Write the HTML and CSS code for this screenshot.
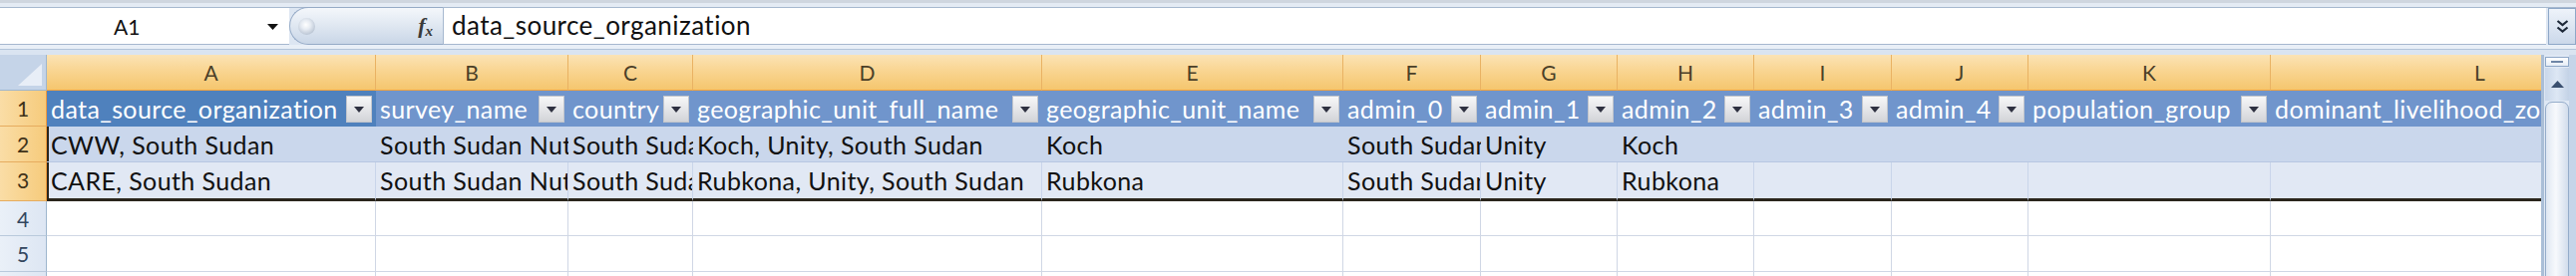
FILE: index.html
```html
<!DOCTYPE html>
<html>
<head>
    <title>Book1 - Sheet1</title>
    <meta name="viewport" content="width=device-width, initial-scale=1.0">
    <link rel="stylesheet" href="styles.css">
</head>
<body>
    <div class="top-edge"></div>

    <!-- Formula bar -->
    <div class="formula-bar">
        <div class="name-box">
            <span class="name-ref">A1</span>
            <svg class="name-arrow" width="11" height="6" viewBox="0 0 11 6"><path d="M0 0H11L5.5 6Z" fill="#111"/></svg>
        </div>
        <div class="fx-pill">
            <span class="grip"></span>
            <span class="fx">f<span class="fx-x">x</span></span>
        </div>
        <div class="formula-input">data_source_organization</div>
        <div class="expand-btn">
            <svg width="13" height="15" viewBox="0 0 13 15"><path d="M1.5 2L6.5 6L11.5 2M1.5 8.5L6.5 12.5L11.5 8.5" fill="none" stroke="#1d2838" stroke-width="2.2"/></svg>
        </div>
    </div>
    <div class="bar-gap"></div>

    <!-- Sheet -->
    <div class="sheet">
        <div class="grid">
            <div class="row head-row">
                <div class="corner">
                    <svg width="24" height="22" viewBox="0 0 24 22"><path d="M24 0V22H0Z" fill="#e8eef7"/></svg>
                </div>
                <div class="col-head">A</div>
                <div class="col-head">B</div>
                <div class="col-head">C</div>
                <div class="col-head">D</div>
                <div class="col-head">E</div>
                <div class="col-head">F</div>
                <div class="col-head">G</div>
                <div class="col-head">H</div>
                <div class="col-head">I</div>
                <div class="col-head">J</div>
                <div class="col-head">K</div>
                <div class="col-head">L</div>
            </div>

            <div class="row table-head">
                <div class="row-head sel">1</div>
                <div class="cell active"><span class="label">data_source_organization</span><span class="filter"></span></div>
                <div class="cell"><span class="label">survey_name</span><span class="filter"></span></div>
                <div class="cell"><span class="label">country</span><span class="filter"></span></div>
                <div class="cell"><span class="label">geographic_unit_full_name</span><span class="filter"></span></div>
                <div class="cell"><span class="label">geographic_unit_name</span><span class="filter"></span></div>
                <div class="cell"><span class="label">admin_0</span><span class="filter"></span></div>
                <div class="cell"><span class="label">admin_1</span><span class="filter"></span></div>
                <div class="cell"><span class="label">admin_2</span><span class="filter"></span></div>
                <div class="cell"><span class="label">admin_3</span><span class="filter"></span></div>
                <div class="cell"><span class="label">admin_4</span><span class="filter"></span></div>
                <div class="cell"><span class="label">population_group</span><span class="filter"></span></div>
                <div class="cell"><span class="label">dominant_livelihood_zone</span><span class="filter"></span></div>
            </div>

            <div class="row band-1">
                <div class="row-head sel">2</div>
                <div class="cell first">CWW, South Sudan</div>
                <div class="cell">South Sudan Nutrition Survey</div>
                <div class="cell">South Sudan</div>
                <div class="cell">Koch, Unity, South Sudan</div>
                <div class="cell">Koch</div>
                <div class="cell">South Sudan</div>
                <div class="cell">Unity</div>
                <div class="cell">Koch</div>
                <div class="cell"></div>
                <div class="cell"></div>
                <div class="cell"></div>
                <div class="cell"></div>
            </div>

            <div class="row band-2">
                <div class="row-head sel">3</div>
                <div class="cell first">CARE, South Sudan</div>
                <div class="cell">South Sudan Nutrition Survey</div>
                <div class="cell">South Sudan</div>
                <div class="cell">Rubkona, Unity, South Sudan</div>
                <div class="cell">Rubkona</div>
                <div class="cell">South Sudan</div>
                <div class="cell">Unity</div>
                <div class="cell">Rubkona</div>
                <div class="cell"></div>
                <div class="cell"></div>
                <div class="cell"></div>
                <div class="cell"></div>
            </div>

            <div class="row empty r4">
                <div class="row-head">4</div>
                <div class="cell"></div><div class="cell"></div><div class="cell"></div><div class="cell"></div>
                <div class="cell"></div><div class="cell"></div><div class="cell"></div><div class="cell"></div>
                <div class="cell"></div><div class="cell"></div><div class="cell"></div><div class="cell"></div>
            </div>

            <div class="row empty">
                <div class="row-head">5</div>
                <div class="cell"></div><div class="cell"></div><div class="cell"></div><div class="cell"></div>
                <div class="cell"></div><div class="cell"></div><div class="cell"></div><div class="cell"></div>
                <div class="cell"></div><div class="cell"></div><div class="cell"></div><div class="cell"></div>
            </div>

            <div class="row empty">
                <div class="row-head">6</div>
                <div class="cell"></div><div class="cell"></div><div class="cell"></div><div class="cell"></div>
                <div class="cell"></div><div class="cell"></div><div class="cell"></div><div class="cell"></div>
                <div class="cell"></div><div class="cell"></div><div class="cell"></div><div class="cell"></div>
            </div>
        </div>

        <!-- Vertical scrollbar -->
        <div class="vscroll">
            <div class="split-box"></div>
            <div class="scroll-up">
                <svg width="13" height="7" viewBox="0 0 13 7"><path d="M0 7L6.5 0L13 7Z" fill="#3a5070"/></svg>
            </div>
            <div class="thumb"></div>
        </div>
    </div>
</body>
</html>
```

FILE: styles.css
```css
body {
    margin: 0;
    width: 2583px;
    height: 277px;
    overflow: hidden;
    background-color: #dde6f2;
    font-family: Lato, "Noto Sans", sans-serif;
    color: #111;
}

.top-edge {
    height: 8px;
    background: linear-gradient(#cfd6df 0, #cfd6df 3px, #e4ebf4 3px);
    border-bottom: 1px solid #a6b8cf;
    box-sizing: border-box;
}

/* Formula bar */
.formula-bar {
    display: flex;
    height: 37px;
}

.name-box {
    width: 290px;
    background-color: #fff;
    border-bottom: 1px solid #a6b8cf;
    box-sizing: border-box;
    display: flex;
    align-items: center;
}

.name-ref {
    margin-left: 114px;
    font-size: 21px;
}

.name-arrow {
    margin-left: 128px;
    margin-top: 2px;
}

.fx-pill {
    width: 154px;
    height: 38px;
    margin-top: -1px;
    box-sizing: border-box;
    border: 1px solid #95aac6;
    border-right: none;
    border-radius: 19px 0 0 19px;
    background: linear-gradient(#f4f7fb, #dfe7f1 50%, #c9d6e7);
    display: flex;
    align-items: center;
    justify-content: space-between;
    padding: 0 10px 0 8px;
}

.grip {
    width: 17px;
    height: 17px;
    border-radius: 50%;
    background: radial-gradient(circle at 45% 40%, #ffffff 0, #e6ebf2 35%, #b9c4d3 75%, #9eabbd 100%);
}

.fx {
    font-family: "Liberation Serif", serif;
    font-style: italic;
    font-weight: bold;
    font-size: 22px;
    color: #3a3a3a;
}

.fx-x {
    font-size: 15px;
    position: relative;
    top: 3px;
}

.formula-input {
    width: 2109px;
    box-sizing: border-box;
    background-color: #fff;
    border-left: 1px solid #a6b8cf;
    border-bottom: 1px solid #a6b8cf;
    padding-left: 8px;
    font-size: 26px;
    letter-spacing: 0.45px;
    line-height: 35px;
    white-space: nowrap;
}

.expand-btn {
    width: 28px;
    margin-left: 2px;
    box-sizing: border-box;
    border: 1px solid #8ea7c7;
    background: linear-gradient(#eef3fa, #cbd8ea);
    display: flex;
    align-items: center;
    justify-content: center;
}

.bar-gap {
    height: 10px;
    background: linear-gradient(#e9eff7 0, #e9eff7 4px, #b3c4da 4px, #b3c4da 5px, #dae4f1 5px);
}

/* Sheet */
.sheet {
    display: flex;
}

.grid {
    width: 2548px;
    overflow: hidden;
}

.row {
    display: grid;
    grid-template-columns: 47px 330px 193px 125px 350px 302px 138px 137px 137px 138px 137px 243px 420px;
    height: 36px;
}

.row > div {
    box-sizing: border-box;
    overflow: hidden;
    white-space: nowrap;
}

.corner {
    background-color: #c5d4e8;
    border-right: 1px solid #9eb6ce;
    border-bottom: 1px solid #9eb6ce;
    display: flex;
    align-items: flex-end;
    justify-content: flex-end;
    padding: 0 4px 4px 0;
}

.col-head {
    background: linear-gradient(#fbe3b5, #f9d592 45%, #f5c66e);
    border-right: 1px solid #e9b263;
    border-bottom: 1px solid #f0a241;
    text-align: center;
    font-size: 21px;
    line-height: 35px;
    color: #4b3f28;
}

.row-head {
    background: linear-gradient(to right, #eaf0f8, #dde6f3);
    border-right: 1px solid #9eb6ce;
    border-bottom: 1px solid #b9c9dc;
    text-align: center;
    font-size: 21px;
    line-height: 35px;
    color: #33465f;
}

.row-head.sel {
    background: linear-gradient(to right, #fadda6, #f6cb7c);
    border-right: 1px solid #f09a3c;
    border-bottom: 1px solid #e6ac5f;
    color: #3e3118;
}

.cell {
    padding-left: 4px;
    font-size: 25px;
    letter-spacing: 0.4px;
    line-height: 36px;
}

/* Table header row */
.table-head .cell {
    display: flex;
    align-items: center;
    background-color: #7095cc;
    color: #fff;
}

.table-head .cell.active {
    background-color: #4f81bd;
}

.label {
    flex: 1;
    overflow: hidden;
}

.filter {
    width: 26px;
    height: 27px;
    margin: 0 4px 0 2px;
    flex-shrink: 0;
    box-sizing: border-box;
    border: 1px solid #c3c6cc;
    background: linear-gradient(#f7f7f8, #e3e4e7 55%, #d2d4d8);
    display: flex;
    align-items: center;
    justify-content: center;
}

.filter::after {
    content: "";
    border-left: 5px solid transparent;
    border-right: 5px solid transparent;
    border-top: 6px solid #2e3040;
    margin-top: 1px;
}

/* Banded rows */
.band-1 .cell {
    background-color: #cad7ec;
    border-bottom: 1px solid #b7c7e2;
}

.band-2 {
    height: 39px;
}

.band-2 .cell {
    background-color: #e1e8f4;
    border-right: 1px solid #c9d5ea;
    border-bottom: 3px solid #2a261c;
}

.band-2 .row-head {
    border-bottom: 1px solid #e6ac5f;
}

.cell.first {
    box-shadow: inset 2px 0 0 #2a261c;
}

/* Empty rows */
.empty .cell {
    background-color: #fff;
    border-right: 1px solid #d0d7e5;
    border-bottom: 1px solid #d0d7e5;
}

.r4 {
    height: 35px;
}

/* Vertical scrollbar */
.vscroll {
    width: 35px;
    height: 222px;
    box-sizing: border-box;
    padding: 2px 7px 0 4px;
    background: linear-gradient(to right, #aabed7 0, #aabed7 3px, #dfe8f4 3px, #dfe8f4 28px, #c6d5e9 28px);
}

.split-box {
    height: 10px;
    box-sizing: border-box;
    border: 1px solid #8fa8c8;
    background: linear-gradient(#ffffff, #e6edf6);
    display: flex;
    align-items: center;
    justify-content: center;
}

.split-box::after {
    content: "";
    width: 12px;
    height: 2px;
    background-color: #6f86a6;
}

.scroll-up {
    height: 33px;
    margin-top: 1px;
    box-sizing: border-box;
    background: linear-gradient(to right, #c9d7ea, #dde7f4 50%, #c3d2e6);
    display: flex;
    align-items: center;
    justify-content: center;
}

.thumb {
    height: 200px;
    margin-top: 1px;
    box-sizing: border-box;
    border: 1px solid #94acca;
    border-radius: 7px 7px 0 0;
    background: linear-gradient(to right, #dfe7f2, #f7f9fc 45%, #d2ddec);
}
```
